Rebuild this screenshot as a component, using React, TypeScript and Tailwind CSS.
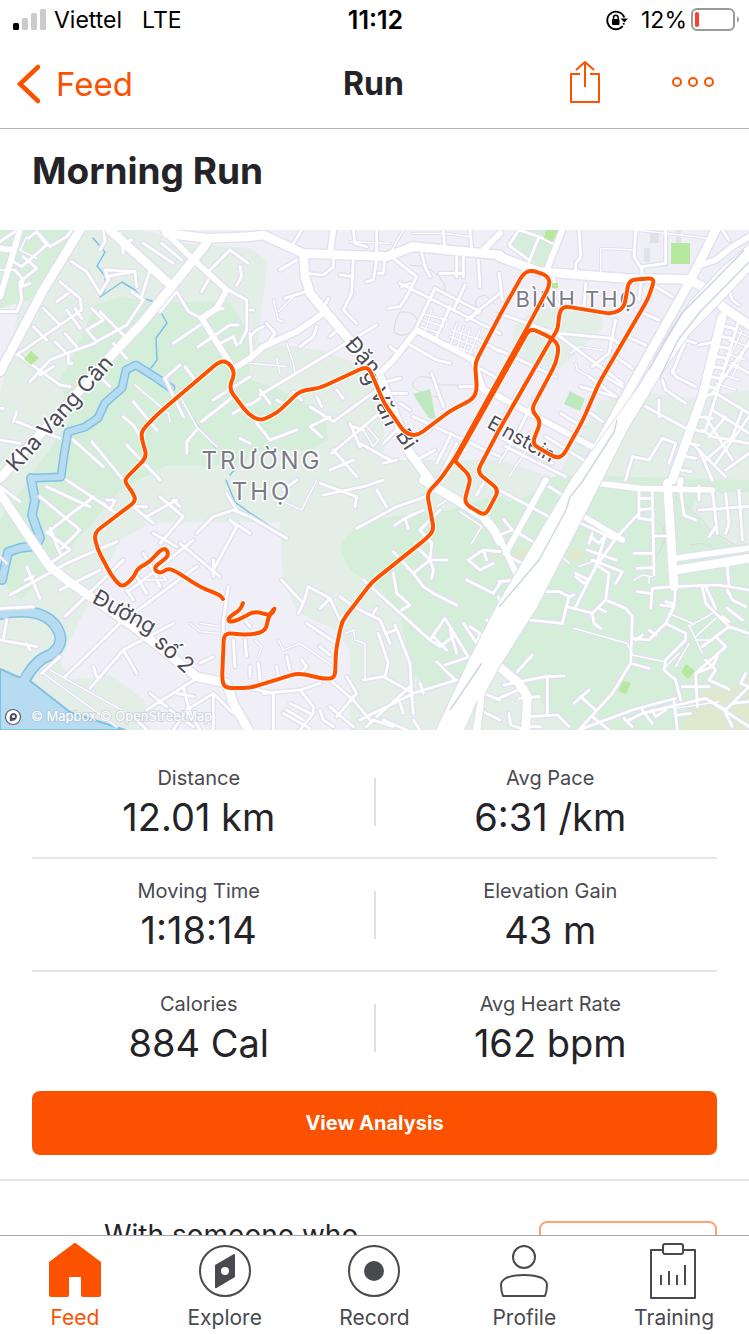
import React from 'react';

type Tile = {
  x: number;
  y: number;
  thin: string;
  minor: string;
  mid: string;
  major: string;
};

/* Street geometry, stored per map tile. One map unit is three tile units. */
const TILES: Tile[] = [
  {
    x: 0,
    y: 0,
    thin: 'M405 465L505 550L510 575M540 500L590 590L650 650M0 120L45 120M80 20L60 60L110 85',
    minor:
      'M0 35L45 5M85 25L110 5L140 45L65 110L40 95M45 120L70 150L65 170L90 160M70 80L110 115L60 155M60 160L65 210L50 245L0 245M150 50L200 20L215 0M150 50L120 15M180 155L240 205L245 240L50 375M170 215L205 190M130 235L180 285M100 290L140 330M215 95L260 125L300 190L325 150L315 120L405 125L410 170M320 140L400 125M200 240L240 295M225 235L245 265M300 245L375 320M260 300L310 270L275 235M260 300L290 335L380 285L430 210L395 185M430 40L520 100M450 120L425 200M485 40L545 90M165 335L195 365M195 310L230 350M205 375L205 400L215 400M90 455L150 390L200 370L285 340M340 340L380 385M55 375L180 465L210 470M120 435L160 410M360 10L370 70M395 30L360 40M310 0L315 35L300 60M480 245L530 185L565 245L605 265M520 340L600 285M595 350L690 285M640 240L670 235M690 285L715 285M650 345L700 320L710 345M605 185L625 150M620 130L690 60L745 100M720 110L725 140L710 165M685 180L740 210L740 300L720 340M400 515L470 600M495 445L550 560M500 440L540 405M555 410L585 450M605 575L700 500M640 510L750 440M700 550L750 520M370 560L400 585L420 620M380 645L480 750M275 635L370 750M220 630L310 710M590 600L560 635L560 670M720 625L750 640M40 575L50 545M50 575L180 625M0 630L60 640M0 535L10 535M300 440L330 470',
    mid: 'M60 0L0 200M490 0L560 70L680 180L650 235L605 265L690 400M710 410L750 385M0 55L40 60',
    major: 'M330 0L500 155M500 10L620 25L750 20M0 745L345 365L430 275L620 40M240 0L130 180L0 425',
  },
  {
    x: 250,
    y: 0,
    thin:
      'M70 210L85 270L100 275M85 245L130 200M110 340L130 400L135 430M0 400L110 410M80 385L90 430M300 35L420 40M420 70L460 0M490 10L585 10L660 20M515 250L590 270M520 270L580 290M510 290L570 310M545 240L520 320M605 300L690 330M600 320L680 350M590 340L670 370M620 280L600 350M640 290L620 360M660 295L640 370M690 300L660 370M340 600L370 650L385 630L350 590',
    minor:
      'M130 40L155 0M90 120L140 90M170 130L220 135L250 110L250 80M310 80L305 190L280 240L320 280M270 135L310 140M380 90L370 150L350 155M405 85L400 130L385 130M310 0L315 40L350 50M380 0L380 70M430 85L500 140L470 200L450 230L415 235M450 160L750 310M480 160L455 170M555 175L500 290M555 175L690 245L650 270M600 230L560 320M645 165L610 240M650 270L750 190M480 345L560 390L600 400M515 70L525 110L540 140M570 130L640 130M620 80L620 140M640 80L640 140M685 90L690 170M580 0L585 70M660 0L665 55M165 185L105 205M235 205L220 235M240 320L275 290M0 240L10 240M0 310L5 370M0 320L20 300L40 290M50 280L75 310L60 330M200 290L190 320L150 350M30 495L380 285M0 525L30 505M30 480L60 520M180 530L250 575L380 480M240 560L180 590L215 620M245 670L400 540M20 580L60 630L140 600M250 660L320 740M300 580L330 650M390 560L440 540M410 455L450 445M400 490L470 490M420 350L445 370M545 430L580 530M490 560L750 680M540 600L480 640M600 620L560 700M310 590L340 600M450 520L480 540M680 410L750 450M630 470L700 470M200 500L215 530M260 480L280 505M80 510L100 520M500 690L555 660M690 330L750 365M330 640L420 690M400 640L440 600M130 485L155 510M240 720L310 690M400 700L440 690M570 740L620 640',
    mid: 'M250 0L240 70M220 250L140 305L40 350L0 385M390 430L430 390L500 300L670 390L700 480L750 500M700 60L750 10',
    major: 'M0 20L40 15L160 70L410 80L490 50L750 75M160 70L165 140L180 190L290 320L390 440L480 670L540 750',
  },
  {
    x: 499,
    y: 0,
    thin:
      'M215 370L240 350L310 360M230 400L235 420L270 440M700 300L750 320M690 330L750 350M680 370L740 390M670 400L740 420M660 430L720 450M650 460L710 480M750 330L700 440M730 300L660 450M0 700L60 600M30 740L110 620M410 60L305 55L305 130M410 0L500 10L590 20L640 30',
    minor:
      'M30 45L60 0M35 50L90 90M60 0L120 20L160 40M90 95L120 20M240 0L245 80L230 100L230 125M410 0L405 80L430 120M430 110L500 100L500 0M0 250L170 310L370 460M85 290L170 330M180 310L340 325L370 350M350 270L330 370L280 410M245 470L350 500M270 440L350 500M185 550L250 590M430 110L420 210M470 170L520 200M410 240L480 270M385 320L440 345M350 380L400 415M320 440L370 470M0 360L170 440M270 545L310 575M20 650L200 740M0 620L160 700M140 620L270 700M170 170L160 130M260 160L255 230M150 180L180 230M60 480L0 590M110 500L60 600M0 130L10 210M520 430L560 330M490 450L500 480L560 520M440 530L570 600M480 560L480 510M520 420L530 440L590 470M600 345L650 335M560 330L590 340M690 180L700 210L720 225M670 0L690 30M720 270L620 600M750 340L640 490M650 490L750 550M610 600L640 620L750 640M640 540L750 610M580 640L680 740M610 500L650 490M700 400L750 430M730 540L700 620L620 690M750 670L680 720M620 560L700 690M600 660L640 750M380 750L400 680L450 690L490 625L530 640L510 700M680 560L630 620M750 560L650 700M680 290L705 295M670 320L697 325M660 350L690 355M652 380L680 385M644 410L672 415M636 440L663 445M628 470L655 475M600 560L640 565M590 600L610 605M570 640L600 645M560 680L590 685M545 720L575 725',
    mid: 'M190 0L140 130M0 500L280 650M590 110L650 90L700 50L750 20',
    major: 'M0 80L120 125L380 145L580 148M570 150L630 180L670 230L750 285M670 260L610 500L520 750M650 0L575 150L240 750',
  },
  {
    x: 0,
    y: 250,
    thin:
      'M570 430L600 455L660 460M600 430L660 440M130 580L350 740M150 570L400 710M0 230L20 250M440 300L500 300L480 280',
    minor:
      'M120 50L240 150L185 205M230 90L280 50M140 160L240 80M200 0L350 100M140 20L270 80M320 60L345 60L330 90L310 70M440 80L400 80M400 80L460 130M460 160L530 200M590 160L640 110L700 90L750 110M580 180L430 300L390 330M480 50L550 110L480 190M530 60L440 110M30 345L200 250L350 185M195 410L370 240M80 260L120 355M75 300L100 290M150 145L180 220M140 155L210 210L150 250M60 65L0 20M180 330L300 270M380 330L400 360M410 290L440 340M430 220L470 290M690 120L710 140L640 270M690 120L750 160M540 190L660 290M640 240L640 290M685 320L670 420L665 600M270 625L370 510L520 430M195 590L360 430L590 260M370 510L410 580M180 530L125 580M280 560L290 590M0 480L110 500M20 420L10 480M80 490L90 510M440 690L590 595M450 640L500 680M550 620L570 700L600 750M520 750L560 690L640 640L700 700M600 550L640 530M640 650L640 750M510 690L580 740M700 480L705 560M735 480L740 530M0 385L100 380M720 400L750 440M530 640L580 650M400 710L440 750M680 40L710 90M520 60L540 80M470 300L480 320',
    mid: '',
    major: 'M0 40L80 160L150 260L200 300L400 440L590 590L680 610L700 670L745 750',
  },
  {
    x: 250,
    y: 250,
    thin:
      'M90 60L155 90L200 0M85 480L100 510L150 490L250 560M15 480L35 500L25 530M285 460L310 450L315 480L345 490L345 600M630 95L695 140L665 190M560 80L590 60',
    minor:
      'M0 110L110 175M100 30L140 0M220 45L340 20L400 0M210 10L320 50L315 80M320 145L440 80L540 45M380 30L410 80M435 135L465 115L475 145M465 115L520 90M510 150L545 190L540 240M430 215L490 280L520 320L550 340L620 375M490 280L540 240L590 240M540 240L550 270L545 295M500 200L540 240M430 280L440 340L480 375L455 390M340 300L540 480L585 415L660 540M95 300L160 370L145 400M160 370L175 320L240 355L270 420M240 355L210 385M170 430L260 490M270 350L310 380L390 420L420 490M370 400L380 385M410 460L435 450M435 435L480 550L485 640M385 460L415 550L405 590M210 500L240 525M110 530L120 570M80 560L85 590M155 540L170 560L150 580M0 560L0 590M25 550L30 600M240 600L310 660L360 720M340 600L400 590L490 640L620 600M560 545L615 600M585 555L660 530M540 480L570 500L610 470M550 470L590 510M600 450L620 520M640 430L680 490L690 460L660 440M330 720L490 640M380 710L480 620M510 610L520 640M0 625L70 640L70 750M40 640L150 630L210 610M150 630L190 680L190 700L150 750M290 590L320 640L260 710M110 690L160 720M120 670L180 700M100 700L180 745M210 690L220 720L250 740M240 680L310 740M450 670L460 700M485 640L490 700M400 720L470 750M350 740L370 720L430 740M490 720L510 750M650 300L730 340L750 310M655 240L690 270L730 250M655 240L700 210L750 215M700 210L710 240M680 45L700 10M570 90L510 150M710 420L730 430M745 350L750 360M690 690L750 720M700 640L750 660',
    mid: '',
    major: 'M520 0L620 60L700 110L735 155L750 185',
  },
  {
    x: 499,
    y: 250,
    thin:
      'M225 445L385 490L400 525L495 545M510 400L580 430M570 440L640 400M590 470L650 415M570 435L610 520M640 480L590 480M530 560L570 490M530 685L660 665M405 300L430 285L460 290M450 290L450 310M190 230L210 250M240 260L290 240M500 560L540 520',
    minor:
      'M15 120L40 150L0 165M0 30L150 110M60 160L110 190M30 230L70 250M150 20L190 45M420 30L420 115L460 120M460 30L465 285M420 55L460 55M420 90L460 85M420 100L355 170L290 260L230 380M320 165L290 260M245 130L320 165L350 180M275 170L300 190L320 165M265 210L350 240M280 240L370 275L350 310M280 160L270 190M405 220L460 220M415 265L465 262M465 168L510 168M230 280L270 300L255 310L230 290M300 260L330 280L320 360L280 400L285 430L305 445M140 335L180 335L210 350L225 345M210 350L190 430L90 420M205 380L280 400M320 360L380 385L400 410L395 550L340 640L240 750M395 550L450 565M300 385L320 395M415 335L455 340M455 385L460 325L525 320L660 315L750 330M485 375L520 380M500 365L520 370M530 320L525 380L500 430L450 480L400 475M450 450L470 465M430 465L410 480M500 430L560 460L560 480L500 540L495 570L530 600L545 660M610 320L620 370L690 440L750 460M620 320L650 385M690 440L610 500M650 470L680 500L590 580L595 680M590 580L640 560L655 530M620 540L650 570L630 600L690 628M550 620L630 620M690 320L685 260M685 330L700 360L740 380M670 410L690 425M685 385L730 420M545 30L555 105L590 120M600 20L600 60M600 90L750 80M640 30L655 160M680 40L690 130L680 160M720 30L730 180M650 140L630 170M280 710L330 750M225 670L270 630M245 650L290 690M15 615L140 590L195 588M145 590L145 700M90 710L175 705L210 740M0 655L80 620M55 575L100 525M60 655L120 650M75 740L125 740M30 700L35 735L80 750M0 305L50 300M0 360L10 370M390 720L430 700L620 655L750 740M240 750L400 690L530 655M375 715L400 740M430 690L460 730M460 690L470 710L500 690M525 665L535 750M535 705L575 700M620 655L680 690L750 620M680 700L700 740M700 670L750 665M725 610L750 620M740 580L725 610',
    mid: 'M140 0L20 220M0 170L60 300M300 10L420 25L640 30M530 235L745 205M255 110L370 180M545 0L540 30',
    major: 'M505 10L515 160L525 320M530 270L750 235M0 560L60 610L85 650L80 750',
  },
];

const HIGHWAY =
  'M760 5L722 38L690 72L640 155L571 250L499 372L470 428L434 505H462L478 468L472 505H480L485 463L499 437L537 377L602 250L627 200L659 147L690 103L715 78L760 30Z';

type Point = [number, number];

/* Joins points with straight runs and rounds every corner by up to `radius`. */
function rounded(points: Point[], radius: number): string {
  let d = `M${points[0][0]} ${points[0][1]}`;
  for (let i = 1; i < points.length - 1; i++) {
    const [px, py] = points[i - 1];
    const [x, y] = points[i];
    const [nx, ny] = points[i + 1];
    const before = Math.hypot(x - px, y - py);
    const after = Math.hypot(nx - x, ny - y);
    const a = Math.min(radius, before / 2) / before;
    const b = Math.min(radius, after / 2) / after;
    d += `L${x + (px - x) * a} ${y + (py - y) * a}Q${x} ${y} ${x + (nx - x) * b} ${y + (ny - y) * b}`;
  }
  const last = points[points.length - 1];
  return `${d}L${last[0]} ${last[1]}`;
}

const ROUTE_WEST: Point[] = [
  [223, 369], [220, 365], [200, 357], [177, 342], [168, 338], [160, 344], [153, 338], [169, 326], [166, 318], [159, 321], [151, 331], [137, 339],
  [134, 347], [122, 358], [111, 345], [97, 318], [94, 303], [136, 271], [133, 263], [125, 252], [126, 248], [147, 227], [141, 206], [143, 199],
  [160, 182], [220, 131], [228, 132], [235, 142], [229, 159], [248, 184], [260, 191], [277, 183], [300, 161], [320, 158], [365, 137], [370, 140],
  [384, 173], [405, 203], [417, 206], [450, 181], [473, 169], [477, 160], [475, 133], [500, 85], [523, 44], [531, 40], [548, 46], [550, 55],
  [527, 98], [455, 228], [440, 250], [427, 263], [434, 300], [427, 308], [372, 352], [342, 391], [336, 420], [335, 448], [325, 449], [298, 443],
  [250, 458], [225, 458], [222, 450], [224, 403], [250, 405], [266, 401], [268, 387], [276, 376], [271, 386], [255, 381], [236, 391], [228, 392], [229, 387],
  [240, 380], [243, 373],
];

const ROUTE_EAST: Point[] = [
  [455, 231], [530, 98], [552, 108], [559, 116], [556, 133], [531, 180], [541, 191], [532, 214], [556, 228], [563, 226], [583, 190],
  [599, 153], [648, 69], [655, 48], [629, 50], [624, 78], [612, 84], [563, 76], [559, 84], [558, 99], [552, 108], [499, 200], [477, 242],
  [499, 260], [485, 286], [464, 273], [471, 247], [455, 231],
];

const TILE_SCALE = 'scale(0.33333)';

function Streets() {
  const layers = [
    { key: 'thin', casing: 10, line: 4 },
    { key: 'minor', casing: 16, line: 8 },
    { key: 'mid', casing: 25, line: 17 },
    { key: 'major', casing: 34, line: 26 },
  ] as const;
  return (
    <g fill="none" strokeLinecap="round" strokeLinejoin="round">
      <g stroke="#e0e0ef">
        {TILES.map((t) => (
          <g key={`${t.x}-${t.y}`} transform={`translate(${t.x} ${t.y}) ${TILE_SCALE}`}>
            {layers.map((l) => (
              <path key={l.key} d={t[l.key]} strokeWidth={l.casing} />
            ))}
          </g>
        ))}
      </g>
      <g stroke="#fff">
        {TILES.map((t) => (
          <g key={`${t.x}-${t.y}`} transform={`translate(${t.x} ${t.y}) ${TILE_SCALE}`}>
            {layers.map((l) => (
              <path key={l.key} d={t[l.key]} strokeWidth={l.line} />
            ))}
          </g>
        ))}
      </g>
    </g>
  );
}

function RouteMap() {
  return (
    <svg viewBox="0 0 749 500" preserveAspectRatio="xMidYMid slice" className="block aspect-[749/500] w-full" role="img" aria-label="Route map">
      <rect width="749" height="500" fill="#f0eef6" />

      <g fill="#e3eee7">
        <path d="M0 0H140L160 5L165 12L250 18L268 32L262 75L258 112L320 120L370 138L383 190L384 230H500L560 250L570 300L520 500H350V420L334 399L297 382L283 350L280 292H195L150 293L120 310L100 350L60 430L70 450L110 445L145 470V500H0V165L20 75L0 70Z" />
        <path d="M555 250L600 171L640 162L690 168L749 160V500H480L500 400Z" />
        <path d="M515 95L545 72L600 78L603 98L560 138L525 135L512 115Z" />
      </g>
      <g fill="#d5eed9">
        <path d="M0 0H75L50 40L30 70L0 78Z" />
        <path d="M95 75L120 67L160 72L230 72L250 105V150L280 160L325 185L328 210L310 220L250 222L245 235L165 236L120 260L95 290L60 330L20 370L0 350V290L70 190L60 150L80 110Z" />
        <path d="M340 320Q345 300 370 290Q410 284 450 280L560 245L749 250V500H560L540 470L500 440L430 460L410 440L400 385L380 360L350 340Z" />
        <path d="M515 0H558L545 42L530 30L510 20Z" />
      </g>
      <g fill="#dfe9cd">
        <path d="M515 320L533 317L532 330L510 328ZM570 318L587 321L580 333L567 328ZM700 463L749 450V500H680Z" />
        <path d="M490 325L500 320V330Z" />
      </g>
      <path d="M700 264L749 262V313L730 315L710 300L690 280ZM499 252L550 250L535 262L510 272L499 265ZM499 465L535 470L570 500H499Z" fill="#e3eee7" />
      <path d="M413 164L430 159L436 190L429 188ZM570 161L585 169L580 181L564 174Z" fill="#bee9bf" />
      <path d="M650 3H659V13H650ZM644 18H650V32H644ZM676 0H681V16H676Z" fill="#dde4e3" />

      <g fill="none" stroke="#d8dadb" strokeWidth="1">
        <path d="M410 35Q435 35 445 55V65M395 103Q392 95 400 82Q418 80 418 96Q405 110 395 103M478 80Q470 68 485 65L495 75M470 155H440Q420 138 412 155Q415 162 440 168M500 225Q515 220 530 200M675 267Q700 285 710 300L735 315M650 290Q665 290 665 310L655 330M690 315Q710 310 715 322" />
      </g>

      <g fill="none" strokeLinecap="round" strokeLinejoin="round">
        <path d="M93 8L105 22L97 36L105 46V60L100 67L122 52L135 60L142 68L152 71M159 79L167 93L156 108L157 130L151 138M181 168L197 195L216 218M236 238L230 245M226 250L235 272L250 283L285 306" stroke="#7cc2e5" strokeWidth="1.5" />
        <g stroke="#7ec1e4">
          <path d="M171 158L155 147L136 135L126 140L122 158L105 173L98 188L85 197L68 202L64 225L61 247L34 248" strokeWidth="9" />
          <path d="M31 248L35 270L32 285L40 308L36 316L20 318L8 322L2 350" strokeWidth="10" />
          <path d="M0 384Q40 376 55 395Q68 413 50 425Q35 430 25 450" strokeWidth="12" />
        </g>
        <path d="M0 439L16 446L29 450L70 482L125 500H0Z" fill="#b7dcf1" stroke="#7ec1e4" strokeWidth="2" />
        <g stroke="#b7dcf1">
          <path d="M171 158L155 147L136 135L126 140L122 158L105 173L98 188L85 197L68 202L64 225L61 247L34 248" strokeWidth="6" />
          <path d="M31 248L35 270L32 285L40 308L36 316L20 318L8 322L2 350" strokeWidth="7" />
          <path d="M0 384Q40 376 55 395Q68 413 50 425Q35 430 22 454" strokeWidth="9" />
        </g>
      </g>

      <Streets />

      <path
        d="M671 13H690V34H671ZM546 0H558L552 12L544 8ZM552 53H558V58H552ZM31 121L39 128L31 135L24 129ZM686 434L695 441L688 449L681 442ZM623 451L631 453L626 464L618 461Z"
        fill="#b7e8a0"
      />

      <g fill="none" strokeLinejoin="round">
        <path d={HIGHWAY} fill="#fff" stroke="#dcdeed" strokeWidth="2" />
        <path d={HIGHWAY} fill="#fff" />
        <path d="M744 20L710 55L682 83L665 110L649 140M749 32L700 82L678 110L660 147M617 190L614 202L582 252L570 267L566 280L539 330L499 377M482 433L450 480" stroke="#cdd6e4" strokeWidth="1.5" />
      </g>

      <g fontFamily='Inter, "Noto Sans", sans-serif' stroke="#fff" strokeWidth="3" strokeLinejoin="round" paintOrder="stroke">
        <g fill="#7b7a87" textAnchor="middle">
          <text x="262" y="239" fontSize="24" letterSpacing="3">TRƯỜNG</text>
          <text x="262" y="270" fontSize="24" letterSpacing="3">THỌ</text>
          <text x="577" y="77" fontSize="22" letterSpacing="2">BÌNH THỌ</text>
        </g>
        <g fill="#4c4c57" fontSize="22">
          <text transform="translate(16 243) rotate(-48)">Kha Vạng Cân</text>
          <text transform="translate(344 115) rotate(49)">Đặn</text>
          <text transform="translate(362 144) rotate(66)">g Văn</text>
          <text transform="translate(395 205) rotate(57)">Bi</text>
          <text transform="translate(486 197) rotate(29)" fontSize="20">Einstein</text>
          <text transform="translate(91 372) rotate(29)">Đường</text>
          <text transform="translate(153 414) rotate(43)">số 2</text>
        </g>
      </g>

      <g fill="none" strokeLinecap="round" strokeLinejoin="round">
        <g stroke="#fff" strokeWidth="6">
          <path d={rounded(ROUTE_WEST, 7)} />
          <path d={rounded(ROUTE_EAST, 7)} />
        </g>
        <g stroke="#fc5200" strokeWidth="4">
          <path d={rounded(ROUTE_WEST, 7)} />
          <path d={rounded(ROUTE_EAST, 7)} />
        </g>
      </g>

      <g>
        <circle cx="13" cy="487" r="7.5" fill="#fff" stroke="#5b5f68" strokeWidth="1.2" />
        <path d="M10 491Q8.5 484 13 483Q17 483 17 487Q16 491.5 10 491Z" fill="#4c505b" />
        <circle cx="13.5" cy="486.5" r="1.5" fill="#fff" />
        <text x="31" y="491" fontFamily="Inter, sans-serif" fontSize="13" fill="#fff" stroke="#a9b3c2" strokeOpacity="0.4" strokeWidth="2" paintOrder="stroke">
          © Mapbox © OpenStreetMap
        </text>
      </g>
    </svg>
  );
}

function StatusBar() {
  return (
    <div className="grid h-10 grid-cols-3 items-center pl-3 pr-2.5 text-[23px] leading-10 text-black">
      <div className="flex items-center gap-2">
        <svg width="34" height="22" viewBox="0 0 34 22" aria-hidden="true">
          <rect x="1" y="14" width="6" height="7" rx="1.5" fill="#000" />
          <g fill="#cbcbcb">
            <rect x="10" y="9" width="6" height="12" rx="1.5" />
            <rect x="19" y="4" width="6" height="17" rx="1.5" />
            <rect x="28" y="0" width="6" height="21" rx="1.5" />
          </g>
        </svg>
        <span>Viettel</span>
        <span className="pl-3">LTE</span>
      </div>
      <div className="text-center text-[25px] font-semibold">11:12</div>
      <div className="flex items-center justify-end gap-1">
        <svg className="mr-2" width="24" height="22" viewBox="0 0 24 22" fill="none" aria-hidden="true">
          <path d="M17.700 17.200A8.800 8.800 0 1 1 19.300 8.500M19 14.200L18.400 15.500" stroke="#000" strokeWidth="1.800" />
          <path d="M15.500 9.500H23L19.500 13.500Z" fill="#000" />
          <rect x="7" y="10" width="7.500" height="6" rx="1" fill="#000" />
          <path d="M8.500 10V8.500a2.300 2.300 0 0 1 4.600 0V10" stroke="#000" strokeWidth="1.500" />
        </svg>
        <span>12%</span>
        <svg width="48" height="24" viewBox="0 0 48 24" fill="none" aria-hidden="true">
          <rect x="1" y="1" width="42" height="21" rx="5" stroke="#9a9a9a" strokeWidth="2" />
          <rect x="4" y="4" width="4" height="15" rx="2" fill="#ff3b30" />
          <path d="M46 8.500q2 1 2 3t-2 3Z" fill="#9a9a9a" />
        </svg>
      </div>
    </div>
  );
}

function Header() {
  return (
    <header className="grid h-[89px] grid-cols-3 items-center border-b border-[#b2b2b2] pl-4 pr-[34px]">
      <a href="#feed" className="flex items-center gap-4 text-[33px] leading-10 text-[#fc5200]">
        <svg width="24" height="40" viewBox="0 0 24 40" fill="none" aria-hidden="true">
          <path d="M22 3L4 20L22 37" stroke="currentColor" strokeWidth="4.500" strokeLinecap="round" />
        </svg>
        Feed
      </a>
      <h1 className="pl-4 text-center text-[32px] font-bold leading-10 text-[#242428]">Run</h1>
      <div className="flex items-center justify-end gap-[69px] pb-1 text-[#fc5200]">
        <button type="button" aria-label="Share">
          <svg width="34" height="44" viewBox="0 0 34 44" fill="none" stroke="currentColor" strokeWidth="2" aria-hidden="true">
            <path d="M12 14H3V42H31V14H22M17 27V2M8 10L17 2L26 10" strokeLinejoin="round" />
          </svg>
        </button>
        <button type="button" aria-label="More options">
          <svg width="44" height="12" viewBox="0 0 44 12" fill="none" stroke="currentColor" strokeWidth="2" aria-hidden="true">
            <circle cx="6" cy="6" r="4" />
            <circle cx="22" cy="6" r="4" />
            <circle cx="38" cy="6" r="4" />
          </svg>
        </button>
      </div>
    </header>
  );
}

function Stat({ label, value }: { label: string; value: string }) {
  return (
    <div className="flex-1 pb-[18px] pt-5 text-center">
      <dt className="text-[20px] leading-6 text-[#494950]">{label}</dt>
      <dd className="mt-[5px] text-[38px] leading-[44px] text-[#242428]">{value}</dd>
    </div>
  );
}

const STATS = [
  [
    { label: 'Distance', value: '12.01 km' },
    { label: 'Avg Pace', value: '6:31 /km' },
  ],
  [
    { label: 'Moving Time', value: '1:18:14' },
    { label: 'Elevation Gain', value: '43 m' },
  ],
  [
    { label: 'Calories', value: '884 Cal' },
    { label: 'Avg Heart Rate', value: '162 bpm' },
  ],
];

function Stats() {
  return (
    <section className="border-b-2 border-[#e5e4ea] px-8 pb-6 pt-4">
      <div className="divide-y-2 divide-[#e5e4ea]">
        {STATS.map(([left, right]) => (
          <div key={left.label}>
            <dl className="-mx-2 flex items-center">
              <Stat {...left} />
              <div className="h-12 w-0.5 bg-[#e0dfe6]" />
              <Stat {...right} />
            </dl>
          </div>
        ))}
      </div>
      <button type="button" className="mt-2 h-16 w-full rounded-lg bg-[#fc5200] text-[20px] font-bold text-white">
        View Analysis
      </button>
    </section>
  );
}

function TabBar() {
  const tab = 'flex flex-1 flex-col items-center gap-1 pt-1.5 text-[21px] leading-6 text-[#494950]';
  return (
    <nav className="flex h-[99px] shrink-0 border-t border-[#a7a7aa] bg-white">
      <a href="#feed" aria-current="page" className="flex flex-1 flex-col items-center gap-1 pt-1.5 text-[21px] leading-6 text-[#fc5200]">
        <svg width="60" height="60" viewBox="0 0 60 60" fill="currentColor" aria-hidden="true">
          <path d="M30 1Q31 1 32 2L56 20V53Q56 55 54 55H38Q36 55 36 53V35H24V53Q24 55 22 55H6Q4 55 4 53V20L28 2Q29 1 30 1Z" />
        </svg>
        Feed
      </a>
      <a href="#explore" className={tab}>
        <svg width="60" height="60" viewBox="0 0 60 60" fill="none" aria-hidden="true">
          <circle cx="30" cy="29" r="25" stroke="currentColor" strokeWidth="2" />
          <path fillRule="evenodd" clipRule="evenodd" d="M20 23L38.500 12.200Q40 11.500 40 13V35L21.500 46Q20 46.500 20 45ZM30 25A4 4 0 1 0 30 33A4 4 0 1 0 30 25Z" fill="currentColor" />
        </svg>
        Explore
      </a>
      <a href="#record" className={tab}>
        <svg width="60" height="60" viewBox="0 0 60 60" fill="none" aria-hidden="true">
          <circle cx="30" cy="29" r="25" stroke="currentColor" strokeWidth="2" />
          <circle cx="30" cy="29" r="10" fill="currentColor" />
        </svg>
        Record
      </a>
      <a href="#profile" className={tab}>
        <svg width="60" height="60" viewBox="0 0 60 60" fill="none" stroke="currentColor" strokeWidth="2" aria-hidden="true">
          <circle cx="30" cy="15" r="11" />
          <path d="M9 54Q7 49 7 43Q7 39 12 36Q19 33 30 33Q41 33 48 36Q53 39 53 43Q53 49 51 54Z" strokeLinejoin="round" />
        </svg>
        Profile
      </a>
      <a href="#training" className={tab}>
        <svg width="60" height="60" viewBox="0 0 60 60" fill="none" stroke="currentColor" strokeWidth="2" aria-hidden="true">
          <path d="M19 8H7V56H51V8H39" strokeLinejoin="round" />
          <rect x="19" y="2" width="20" height="10" rx="2" />
          <path d="M17 33V43M25 29V43M33 33V43M41 23V43" />
        </svg>
        Training
      </a>
    </nav>
  );
}

export default function App() {
  return (
    <div className="flex h-dvh flex-col bg-white font-[Inter,'Noto_Sans',sans-serif]">
      <StatusBar />
      <Header />
      <main className="min-h-0 flex-1 overflow-y-auto [scrollbar-width:none]">
        <h2 className="px-8 pb-[35px] pt-[18px] text-[37px] font-bold leading-[48px] text-[#242428]">Morning Run</h2>
        <RouteMap />
        <Stats />
        <section className="flex items-start justify-between px-8 pb-8 pt-9 text-[#242428]">
          <div className="flex">
            <svg className="mt-[18px] w-[72px]" height="36" viewBox="0 0 72 36" fill="none" stroke="currentColor" strokeWidth="2" aria-hidden="true">
              <circle cx="33" cy="9" r="8" />
              <path d="M18 34Q18 21 33 21Q48 21 48 34Z" />
            </svg>
            <p className="text-[28px] leading-9">With someone who</p>
          </div>
          <button type="button" aria-label="Add others" className="mt-1 h-16 w-[178px] rounded-lg border-2 border-[#ffa27b]" />
        </section>
      </main>
      <TabBar />
    </div>
  );
}
